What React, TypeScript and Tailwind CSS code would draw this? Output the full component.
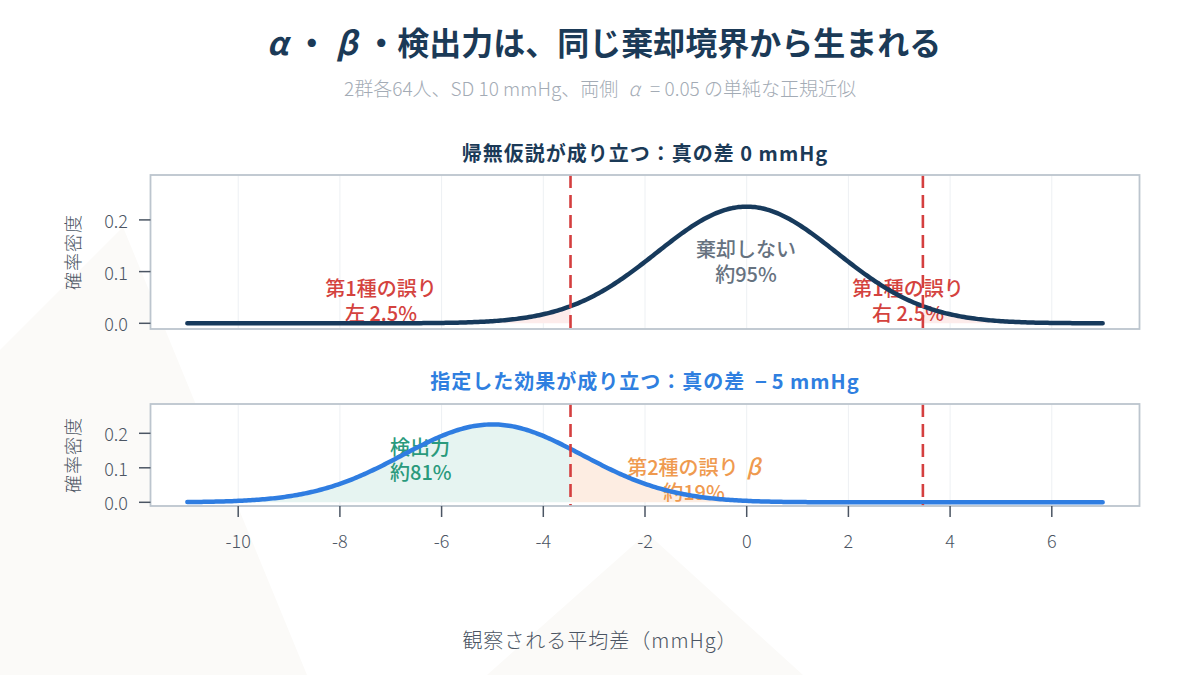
const SE = 10 * Math.sqrt(2 / 64);
const CRIT = 1.96 * SE;
const X0 = 746.7;
const SX = 50.85;
const BOX_L = 150.5;
const BOX_R = 1139.5;
const TICKS_X = [-10, -8, -6, -4, -2, 0, 2, 4, 6];

const px = (x: number) => X0 + x * SX;
const pdf = (x: number, mu: number) =>
  Math.exp(-0.5 * ((x - mu) / SE) ** 2) / (SE * Math.sqrt(2 * Math.PI));

function points(mu: number, y0: number, sy: number, from: number, to: number) {
  const out: string[] = [];
  const n = Math.ceil((to - from) / 0.04);
  for (let i = 0; i <= n; i++) {
    const x = from + ((to - from) * i) / n;
    out.push(`${px(x).toFixed(2)} ${(y0 - pdf(x, mu) * sy).toFixed(2)}`);
  }
  return out;
}

type Fill = { from: number; to: number; color: string };
type Note = { x: number; y: number; lines: React.ReactNode[]; color: string; anchor?: "start" | "middle"; size: number };

interface PanelProps {
  top: number;
  height: number;
  boxTop: number;
  boxBottom: number;
  y0: number;
  sy: number;
  mu: number;
  stroke: string;
  fills: Fill[];
  notes: Note[];
  xTicks?: boolean;
}

function Panel({ top, height, boxTop, boxBottom, y0, sy, mu, stroke, fills, notes, xTicks }: PanelProps) {
  const mid = (boxTop + boxBottom) / 2;
  return (
    <svg width={1200} height={height} viewBox={`0 ${top} 1200 ${height}`} className="block">
      <rect x={BOX_L} y={boxTop} width={BOX_R - BOX_L} height={boxBottom - boxTop} fill="#ffffff" />
      {TICKS_X.map((t) => (
        <line key={t} x1={px(t)} x2={px(t)} y1={boxTop} y2={boxBottom} stroke="#edf0f3" strokeWidth={1} />
      ))}
      {fills.map((f, i) => (
        <path
          key={i}
          d={`M ${px(f.from)} ${y0} L ${points(mu, y0, sy, f.from, f.to).join(" L ")} L ${px(f.to)} ${y0} Z`}
          fill={f.color}
        />
      ))}
      {notes.map((n, i) => (
        <text
          key={i}
          x={n.x}
          y={n.y}
          textAnchor={n.anchor ?? "middle"}
          fill={n.color}
          fontSize={n.size}
          fontWeight={500}
        >
          {n.lines.map((l, j) => (
            <tspan key={j} x={n.x} dy={j === 0 ? 0 : 24.5}>
              {l}
            </tspan>
          ))}
        </text>
      ))}
      <path
        d={`M ${points(mu, y0, sy, -11, 7).join(" L ")}`}
        fill="none"
        stroke={stroke}
        strokeWidth={4.5}
        strokeLinecap="round"
        strokeLinejoin="round"
      />
      {[-CRIT, CRIT].map((c) => (
        <line
          key={c}
          x1={px(c)}
          x2={px(c)}
          y1={boxTop}
          y2={boxBottom}
          stroke="#d43f3f"
          strokeWidth={2.6}
          strokeDasharray="13 7"
        />
      ))}
      <rect
        x={BOX_L}
        y={boxTop}
        width={BOX_R - BOX_L}
        height={boxBottom - boxTop}
        fill="none"
        stroke="#bcc5ce"
        strokeWidth={1.8}
      />
      {[0, 0.1, 0.2].map((v) => (
        <g key={v}>
          <line x1={139} x2={BOX_L} y1={y0 - v * sy} y2={y0 - v * sy} stroke="#4b5563" strokeWidth={1.5} />
          <text x={128} y={y0 - v * sy} textAnchor="end" dominantBaseline="central" fontSize={18} fontWeight={300} fill="#4b5563">
            {v.toFixed(1)}
          </text>
        </g>
      ))}
      <text
        transform={`translate(72 ${mid}) rotate(-90)`}
        textAnchor="middle"
        dominantBaseline="central"
        fontSize={18}
        fontWeight={300}
        letterSpacing={1}
        fill="#4b5563"
      >
        確率密度
      </text>
      {xTicks &&
        TICKS_X.map((t) => (
          <g key={t}>
            <line x1={px(t)} x2={px(t)} y1={boxBottom} y2={boxBottom + 11} stroke="#4b5563" strokeWidth={1.5} />
            <text x={px(t)} y={540} textAnchor="middle" dominantBaseline="central" fontSize={18} fontWeight={300} fill="#4b5563">
              {t}
            </text>
          </g>
        ))}
    </svg>
  );
}

export default function App() {
  return (
    <div className="relative h-[675px] w-[1200px] overflow-hidden bg-white font-['Noto_Sans_CJK_JP','Noto_Sans',sans-serif]">
      <svg className="absolute inset-0" width={1200} height={675}>
        <polygon points="0,350 123,227 307,675 0,675" fill="#fbfaf8" />
        <polygon points="487,675 647,533 803,675" fill="#fbfaf8" />
      </svg>
      <div className="relative flex flex-col">
        <h1 className="pt-[20px] text-center text-[32px] font-bold leading-[42px] text-[#1b3a57]">
          <i className="px-[8px]">α</i>・<i className="px-[8px]">β</i>・検出力は、同じ棄却境界から生まれる
        </h1>
        <p className="mt-[14px] text-center text-[19px] font-light leading-[24px] text-[#a3abb5]">
          2群各64人、SD 10 mmHg、両側 <i className="mx-[6px]">α</i> = 0.05 の単純な正規近似
        </p>
        <h2 className="ml-[150px] mt-[40px] w-[990px] text-center text-[20px] font-bold leading-[26px] tracking-[1px] text-[#1b3a57]">
          帰無仮説が成り立つ：真の差 0 mmHg
        </h2>
        <Panel
          top={166}
          height={180}
          boxTop={175}
          boxBottom={329}
          y0={323.3}
          sy={517}
          mu={0}
          stroke="#173a5c"
          fills={[
            { from: -11, to: -CRIT, color: "#fdeceb" },
            { from: CRIT, to: 7, color: "#fdeceb" },
          ]}
          notes={[
            { x: 381, y: 296, lines: ["第1種の誤り", "左 2.5%"], color: "#d4423e", size: 20 },
            { x: 746, y: 257, lines: ["棄却しない", "約95%"], color: "#66727f", size: 20 },
            { x: 908, y: 296, lines: ["第1種の誤り", "右 2.5%"], color: "#d4423e", size: 20 },
          ]}
        />
        <h2 className="ml-[150px] mt-[22px] w-[990px] text-center text-[20px] font-bold leading-[26px] tracking-[1px] text-[#2f7fe0]">
          指定した効果が成り立つ：真の差 <span className="mx-[4px]">−</span>5 mmHg
        </h2>
        <Panel
          top={394}
          height={160}
          boxTop={404}
          boxBottom={506}
          y0={502.3}
          sy={345}
          mu={-5}
          stroke="#2f7de1"
          fills={[
            { from: -11, to: -CRIT, color: "#e6f4f1" },
            { from: -CRIT, to: 7, color: "#fdede2" },
          ]}
          notes={[
            { x: 390, y: 455, lines: ["検出力", "約81%"], color: "#2a9a7c", size: 20, anchor: "start" },
            {
              x: 694,
              y: 475,
              lines: [
                <>
                  第2種の誤り
                  <tspan dx={8} fontStyle="italic" fontSize={22}>
                    β
                  </tspan>
                </>,
                "約19%",
              ],
              color: "#ef9a4f",
              size: 20,
            },
          ]}
          xTicks
        />
        <p className="mt-[74px] text-center text-[20px] font-light leading-[24px] tracking-[1px] text-[#4b5563]">
          観察される平均差（mmHg）
        </p>
      </div>
    </div>
  );
}
